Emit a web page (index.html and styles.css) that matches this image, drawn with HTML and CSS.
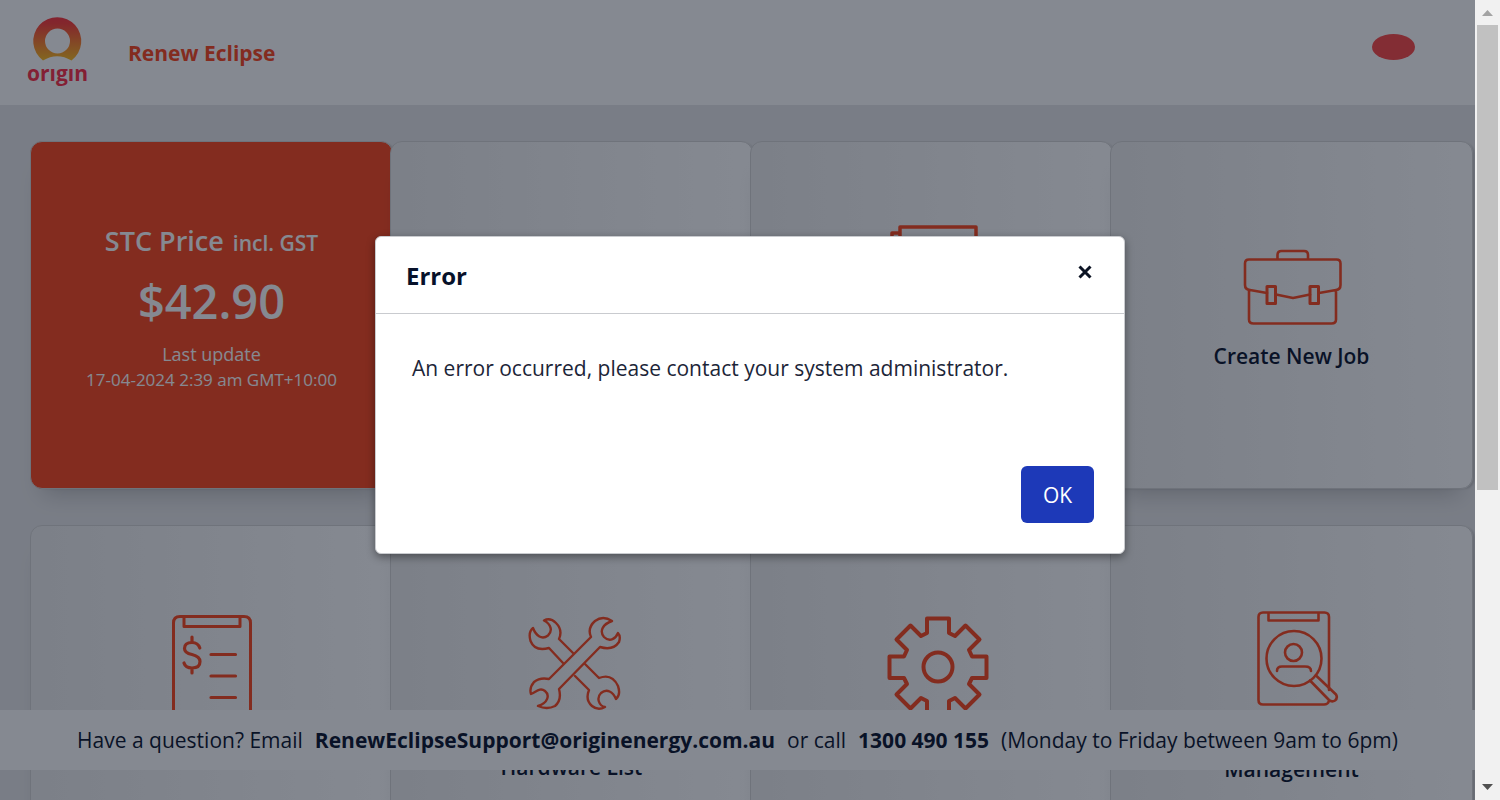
FILE: index.html
```html
<!DOCTYPE html>
<html lang="en">
<head>
<meta charset="utf-8">
<title>Renew Eclipse</title>
<link rel="stylesheet" href="styles.css">
</head>
<body>
<div class="window">
  <div class="page">
    <header class="header">
      <svg class="logo" width="60" height="74" viewBox="0 0 60 74" role="img" aria-label="Origin">
        <defs><linearGradient id="sun" x1="0" y1="0" x2="0" y2="1"><stop offset="0" stop-color="#fb313b"/><stop offset="0.15" stop-color="#fb3b35"/><stop offset="1" stop-color="#fbbb1b"/></linearGradient></defs>
        <path fill="url(#sun)" fill-rule="evenodd" d="M15 44.500A24 24 0 1 1 43.500 44.500Q29 36 15 44.500ZM29.500 12.500A12.500 12.500 0 1 0 29.500 37.500A12.500 12.500 0 1 0 29.500 12.500Z"/>
        <text class="logo-word" x="29.500" y="65" text-anchor="middle">orıgın</text>
      </svg>
      <h1 class="app-name">Renew Eclipse</h1>
      <button class="profile" type="button" aria-label="Profile"></button>
    </header>

    <main class="tiles">
      <section class="tile tile-price">
        <h2 class="price-title">STC Price <small>incl. GST</small></h2>
        <p class="price">$42.90</p>
        <p class="price-note">Last update</p>
        <p class="price-date">17-04-2024 2:39 am GMT+10:00</p>
      </section>
      <a class="tile" href="#"></a>
      <a class="tile tile-docs" href="#">
        <svg class="icon" width="100" height="100" viewBox="0 0 100 100"><path stroke-width="3.500" d="M13 96V2H89V96ZM13 8H5V98H82"/></svg>
      </a>
      <a class="tile tile-job" href="#">
        <svg class="icon" width="102" height="78" viewBox="-2 0 102 78">
          <path stroke-width="2.600" d="M34.500 10V6Q34.500 2 38.500 2H61Q65 2 65 6V10M6 10.500H93.500Q97.500 10.500 97.500 14.500V36Q97.500 40.500 93 41L76 44M67 45.500L50 49L33 45.500M24 44L7 41Q2 40.500 2 36V14.500Q2 10.500 6 10.500M6 41V70.500Q6 74.500 10.500 74.500H88.500Q93 74.500 93 70.500V41"/>
          <path stroke-width="3" d="M24 37.500H32.500V54.500H24ZM67 37.500H75.500V54.500H67Z"/>
        </svg>
        <span class="label">Create New Job</span>
      </a>

      <a class="tile tile-claims" href="#">
        <svg class="icon" width="82" height="108" viewBox="0 0 82 108">
          <path stroke-width="3" d="M9 2.500H73Q79.500 2.500 79.500 9V99Q79.500 105 73 105H9Q2.500 105 2.500 99V9Q2.500 2.500 9 2.500ZM13 3V12.500H69V3"/>
          <path stroke-width="3.200" d="M40 40.500H64.500M40 62H64.500M40 83.500H64.500"/>
          <path stroke-width="3.200" d="M21 23V28M21 54V59M28.800 34Q27 28.500 21 28.500Q13.500 28.500 13.500 34.500Q13.500 39 21 40.500Q29 42.500 29 47.500Q29 54 21 54Q14.500 54 13 49"/>
        </svg>
      </a>
      <a class="tile tile-hardware" href="#">
        <svg class="icon" width="102" height="96" viewBox="-6 0 102 96">
          <g stroke-width="2.400">
            <path d="M46 37L32 23Q36 14 29 7Q23 1 17 4.500C24 8 26 15 21 19.500C15 24 9 20 6 12Q1 16 3.500 25Q8 36 22 32L36 47M48 60L62 74Q58 84 65 90Q71 95 78 91C72 90 69 82 74 77C80 72 86 76 89 83Q94 79 91 70Q85 57 72 62L58 48"/>
            <path d="M22 63L64 21Q60 12 68 5Q76 -1 85 5C76 8 72 15 77 21C83 27 89 22 91 17Q94 20 92 26Q86 35 73 31L32 73Q35 84 28 90Q20 94 11 90C21 87 23 79 18 75C13 71 9 76 4 78Q2 72 7 66Q13 61 22 63Z"/>
          </g>
        </svg>
        <span class="label">Hardware List</span>
      </a>
      <a class="tile tile-settings" href="#">
        <svg class="icon" width="102" height="102" viewBox="0 0 102 102">
          <g stroke-width="4"><path d="M40 2.500H62V17L68 20L78.500 9.500L92.500 23.500L82 34L85 40.500H99.500V62H85L82 68L92.500 78.500L78.500 92.500L68 82L62 85V99.500H40V85L34 82L23.500 92.500L9.500 78.500L20 68L17 62H2.500V40.500H17L20 34L9.500 23.500L23.500 9.500L34 20L40 17Z"/><circle cx="51" cy="51" r="14.500"/></g>
        </svg>
      </a>
      <a class="tile tile-users" href="#">
        <svg class="icon" width="94" height="98" viewBox="-10 0 94 98">
          <g stroke-width="2.600"><path d="M74 80V7Q74 2.500 69.500 2.500H8Q3.500 2.500 3.500 7V90Q3.500 94.500 8 94.500H69Q73 94.500 74 91M13.500 3V10.500H63.500V3"/><circle cx="39" cy="48.500" r="27.500"/><circle cx="38.500" cy="42.500" r="8.500"/><path d="M22 61Q22 56.500 27 56.500H50Q56 56.500 56 61M61 65.500L81 84.500Q83 88 80 90.500Q77 92.500 74 90L55 70.500"/></g>
        </svg>
        <span class="label">Management</span>
      </a>
    </main>

    <footer class="contact">
      <span>Have a question? Email</span>
      <a href="mailto:RenewEclipseSupport@originenergy.com.au">RenewEclipseSupport@originenergy.com.au</a>
      <span>or call</span>
      <a href="tel:1300490155">1300 490 155</a>
      <span>(Monday to Friday between 9am to 6pm)</span>
    </footer>
    <div class="shade"></div>
  </div>

  <div class="scrollbar" aria-hidden="true">
    <svg width="25" height="25" viewBox="0 0 25 25"><path fill="#a3a3a3" d="M7 16L12.500 10L18 16Z"/></svg>
    <div class="track"><div class="thumb"></div></div>
    <svg width="25" height="25" viewBox="0 0 25 25"><path fill="#505050" d="M7 9L12.500 15L18 9Z"/></svg>
  </div>
</div>

<div class="modal" role="dialog" aria-labelledby="modal-title">
  <div class="modal-head">
    <h2 id="modal-title">Error</h2>
    <button class="close" type="button" aria-label="Close"><svg width="14" height="14" viewBox="0 0 14 14"><path d="M1.500 1.500L12.500 12.500M12.500 1.500L1.500 12.500" stroke="#0b1323" stroke-width="3"/></svg></button>
  </div>
  <p class="message">An error occurred, please contact your system administrator.</p>
  <div class="modal-foot"><button class="ok" type="button">OK</button></div>
</div>
</body>
</html>
```
FILE: styles.css
```css
* { box-sizing: border-box; }
body {
  margin: 0;
  color: #07112a;
  font-family: "Open Sans", "Noto Sans", sans-serif;
  font-size: 21px;
}
h1, h2, p { margin: 0; }
button { border: 0; padding: 0; font: inherit; color: inherit; }
a { color: inherit; text-decoration: none; }

.window { display: grid; grid-template-columns: 1fr 25px; height: 100vh; overflow: hidden; }
.page { position: relative; overflow: hidden; min-width: 0; background: #e7e7e8; }
.shade { position: absolute; inset: 0; background: #0b1323; opacity: 0.5; }

.header { display: flex; align-items: center; height: 105px; padding: 0 60px 0 28px; background: #fff; }
.logo { flex: none; overflow: visible; }
.logo-word { fill: #fb2c44; font-size: 21px; font-weight: 700; }
.app-name { margin-left: 40px; color: #fb451b; font-size: 21px; font-weight: 700; }
.profile { width: 43px; height: 26px; margin: 0 0 12px auto; border-radius: 50%; background: #fb4644; }

.tiles {
  display: grid;
  grid-template-columns: repeat(4, 1fr);
  grid-auto-rows: 348px;
  row-gap: 36px;
  padding: 36px 5px 36px 30px;
}
.tile {
  display: flex;
  flex-direction: column;
  align-items: center;
  margin-right: -3px;
  border: 1px solid #d3d3d3;
  border-radius: 12px;
  background: linear-gradient(90deg, #ececec, #fff);
  box-shadow: 0 18px 22px -14px rgba(0, 0, 0, 0.22), 3px 1px 2px -1px rgba(0, 0, 0, 0.15);
}
.icon { flex: none; fill: none; stroke: #fb451b; stroke-linecap: round; stroke-linejoin: round; }
.label { font-size: 21px; line-height: 30px; font-weight: 600; }
.tile-price { padding-top: 79px; background: #fb451b; color: #fff; }
.price-title { font-size: 27px; line-height: 40px; font-weight: 600; }
.price-title small { margin-left: 2px; font-size: 21px; }
.price { font-size: 47px; line-height: 76px; font-weight: 600; }
.price-note { font-size: 18px; line-height: 31px; }
.price-date { font-size: 17px; line-height: 20px; }
.tile-docs { padding: 83px 0 0 10px; }
.tile-job { gap: 14px; padding-top: 107px; }
.tile-claims { padding-top: 88px; }
.tile-hardware { gap: 40px; padding-top: 90px; }
.tile-settings { padding: 90px 0 0 12px; }
.tile-users { gap: 46px; padding-top: 84px; }

.contact {
  position: absolute;
  right: 0;
  bottom: 30px;
  left: 0;
  display: flex;
  justify-content: center;
  align-items: center;
  gap: 12px;
  height: 60px;
  background: #fff;
  white-space: nowrap;
}
.contact a { font-weight: 700; }

.scrollbar { display: flex; flex-direction: column; background: #f1f1f1; }
.track { flex: 1; padding: 0 2px; }
.thumb { height: 62%; background: #c1c1c1; }

.modal {
  position: absolute;
  top: 236px;
  left: 25%;
  width: 50%;
  border: 1px solid #c9cbcf;
  border-radius: 6px;
  background: #fff;
  box-shadow: 0 3px 9px rgba(0, 0, 0, 0.4);
}
.modal-head { display: flex; justify-content: space-between; height: 77px; padding: 19px 30px 0; border-bottom: 1px solid #c9cbcf; }
.modal-head h2 { font-size: 24px; line-height: 40px; font-weight: 700; }
.close { width: 18px; height: 30px; background: none; }
.message { padding: 39px 36px 0; color: #1c2538; line-height: 30px; }
.modal-foot { display: flex; justify-content: flex-end; padding: 83px 30px 30px; }
.ok { width: 73px; height: 57px; border-radius: 6px; background: #1d39b8; color: #fff; }
```
